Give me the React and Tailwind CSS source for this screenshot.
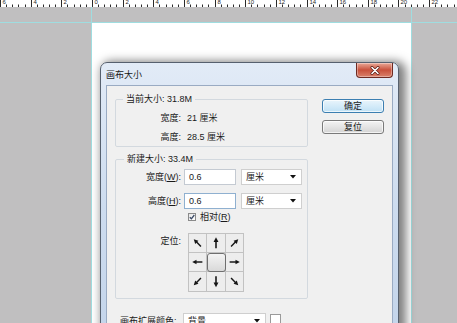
import React from "react";

const RULER_LABELS = ["6", "4", "2", "0", "2", "4", "6", "8", "10", "12", "14", "16", "18", "20", "22"];

const Ruler = () => {
  const step = 30.65;
  const marks = [];
  RULER_LABELS.forEach((label, i) => {
    const x = Math.round(i * step) + 0.5;
    marks.push(<line key={`M${i}`} x1={x} y1={0} x2={x} y2={7} stroke="#2a2a2a" strokeWidth={1} />);
    marks.push(
      <text key={`T${i}`} x={x + 2} y={3.5} fontSize="6" fill="#2a2a2a" fontFamily="Liberation Sans, sans-serif">
        {label}
      </text>
    );
    for (let j = 1; j < 5; j++) {
      const mx = Math.round(i * step + (j * step) / 5) + 0.5;
      marks.push(<line key={`m${i}-${j}`} x1={mx} y1={4.5} x2={mx} y2={7} stroke="#2a2a2a" strokeWidth={1} />);
    }
  });
  return (
    <svg width="457" height="7" className="block bg-white shrink-0">
      {marks}
    </svg>
  );
};

const Arrow = ({ angle }) => (
  <svg width="100%" height="100%" viewBox="-8 -8 16 16">
    <g transform={`rotate(${angle})`}>
      <line x1="0" y1="6" x2="0" y2="-2" stroke="#151515" strokeWidth="1.8" />
      <polygon points="0,-6.5 -2.8,-1.2 2.8,-1.2" fill="#151515" />
    </g>
  </svg>
);

const DropArrow = () => (
  <svg width="6" height="4" viewBox="0 0 6 4" className="shrink-0">
    <polygon points="0,0 6,0 3,3.5" fill="#111" />
  </svg>
);

const CloseButton = () => (
  <div className="w-[37px] h-[15px] rounded-b-[4px] border border-t-0 border-[#6e2a22] bg-gradient-to-b from-[#e9a897] via-[#c8503b] to-[#d9806a] flex items-center justify-center shadow-[inset_0_0_0_1px_rgba(255,255,255,0.35)]">
    <svg width="10" height="9" viewBox="0 0 10 9">
      <path d="M2 1.5 L8 7.5 M8 1.5 L2 7.5" stroke="#5a1c14" strokeWidth="3" strokeLinecap="round" />
      <path d="M2 1.5 L8 7.5 M8 1.5 L2 7.5" stroke="#ffffff" strokeWidth="1.6" strokeLinecap="round" />
    </svg>
  </div>
);

const TextInput = ({ value, border }) => (
  <div className={`w-[52px] h-[16px] bg-white border ${border} flex items-center pl-[4px]`}>{value}</div>
);

const Select = ({ value, width }) => (
  <div className={`${width} h-[16px] bg-white border border-[#cfcfcf] flex items-center justify-between pl-[4px] pr-[5px]`}>
    <span>{value}</span>
    <DropArrow />
  </div>
);

const ANCHORS = [315, 0, 45, 270, null, 90, 225, 180, 135];

const App = () => {
  return (
    <div className="w-[457px] h-[323px] overflow-hidden bg-[#c0bfc0] relative flex flex-col font-['Liberation_Sans','Noto_Sans_CJK_SC',sans-serif] text-[9px] leading-[12px] text-[#1a1a1a]">
      <Ruler />
      <div className="flex h-[15px] shrink-0">
        <div className="w-[91px]" />
        <div className="w-[321px] border-x border-[#9fdde0]" />
        <div className="flex-1" />
      </div>
      <div className="flex flex-1 border-t border-[#9fdde0]">
        <div className="w-[91px]" />
        <div className="w-[321px] bg-white border-x border-[#9fdde0]" />
        <div className="flex-1" />
      </div>

      {/* dialog window */}
      <div className="absolute left-[100px] top-[62px] w-[299px] h-[290px] rounded-t-[7px] border border-[#56606e] bg-gradient-to-b from-[#e2ebf7] via-[#cddcef] to-[#c3d4ea] shadow-[4px_2px_10px_3px_rgba(0,0,0,0.5)] flex flex-col">
        <div className="h-[22px] flex items-start justify-between pl-[5px] pr-[5px] shrink-0">
          <span className="mt-[6px]">画布大小</span>
          <CloseButton />
        </div>
        <div className="mx-[5px] flex-1 bg-[#f0f0f0] border border-[#9aabc3] flex items-start pl-[8px]">
          <div className="w-[193px] mt-[7px] flex flex-col">
            <fieldset className="border border-[#d3d9df] rounded-[2px] pt-[3px]">
              <legend className="ml-[7px] px-[3px] h-[12px]">当前大小: 31.8M</legend>
              <div className="h-[19px] flex items-center">
                <span className="w-[65px] text-right">宽度:</span>
                <span className="ml-[6px]">21 厘米</span>
              </div>
              <div className="h-[19px] flex items-center">
                <span className="w-[65px] text-right">高度:</span>
                <span className="ml-[6px]">28.5 厘米</span>
              </div>
            </fieldset>

            <fieldset className="mt-[6px] border border-[#d3d9df] rounded-[2px] pb-[6px]">
              <legend className="ml-[8px] px-[3px] h-[12px]">新建大小: 33.4M</legend>
              <div className="mt-[4px] flex items-center">
                <span className="w-[65px] text-right">
                  宽度(<span className="underline">W</span>):
                </span>
                <div className="ml-[3px]">
                  <TextInput value="0.6" border="border-[#c4cad2]" />
                </div>
                <div className="ml-[5px]">
                  <Select value="厘米" width="w-[61px]" />
                </div>
              </div>
              <div className="mt-[8px] flex items-center">
                <span className="w-[65px] text-right">
                  高度(<span className="underline">H</span>):
                </span>
                <div className="ml-[3px]">
                  <TextInput value="0.6" border="border-[#8fb0d0]" />
                </div>
                <div className="ml-[5px]">
                  <Select value="厘米" width="w-[61px]" />
                </div>
              </div>
              <div className="mt-[3px] h-[10px] flex items-center">
                <div className="ml-[72px] w-[8px] h-[8px] border border-[#8a8a8a] bg-gradient-to-br from-[#e6e6e6] to-[#ffffff] flex items-center justify-center">
                  <svg width="6" height="6" viewBox="0 0 6 6">
                    <path d="M0.8 3.2 L2.4 4.8 L5.3 1" stroke="#3b4a66" strokeWidth="1.3" fill="none" />
                  </svg>
                </div>
                <span className="ml-[4px]">
                  相对(<span className="underline">R</span>)
                </span>
              </div>
              <div className="mt-[11px] flex items-start">
                <span className="w-[65px] text-right mt-[2px]">定位:</span>
                <div className="ml-[7px] grid grid-cols-[17px_18px_17px] grid-rows-[18px_18px_19px] gap-px bg-[#c2c2c2] border border-[#c2c2c2]">
                  {ANCHORS.map((angle, i) =>
                    angle === null ? (
                      <div key={i} className="bg-[#ebebeb] flex items-center justify-center">
                        <div className="w-[19px] h-[19px] rounded-[3px] border border-[#6f6f6f] bg-gradient-to-b from-[#f4f4f4] to-[#d9d9d9] shrink-0" />
                      </div>
                    ) : (
                      <div key={i} className="bg-[#ededed] p-[2px]">
                        <Arrow angle={angle} />
                      </div>
                    )
                  )}
                </div>
              </div>
            </fieldset>

            <div className="mt-[14px] ml-[5px] flex items-center">
              <span className="w-[60px]">画布扩展颜色:</span>
              <div className="ml-[3px]">
                <Select value="背景" width="w-[83px]" />
              </div>
              <div className="ml-[4px] w-[11px] h-[14px] bg-white border border-[#9a9a9a]" />
            </div>
          </div>

          <div className="ml-[14px] mt-[13px] flex flex-col gap-[7px]">
            <button className="w-[62px] h-[14px] rounded-[3px] border border-[#3c7fb1] bg-gradient-to-b from-[#e9f5fc] to-[#bfe1f5] flex items-center justify-center leading-none shadow-[inset_0_0_0_1px_rgba(255,255,255,0.7)]">
              确定
            </button>
            <button className="w-[62px] h-[14px] rounded-[3px] border border-[#7a7a7a] bg-gradient-to-b from-[#f4f4f4] to-[#d4d4d4] flex items-center justify-center leading-none shadow-[inset_0_0_0_1px_rgba(255,255,255,0.7)]">
              复位
            </button>
          </div>
        </div>
      </div>
    </div>
  );
};

export default App;
